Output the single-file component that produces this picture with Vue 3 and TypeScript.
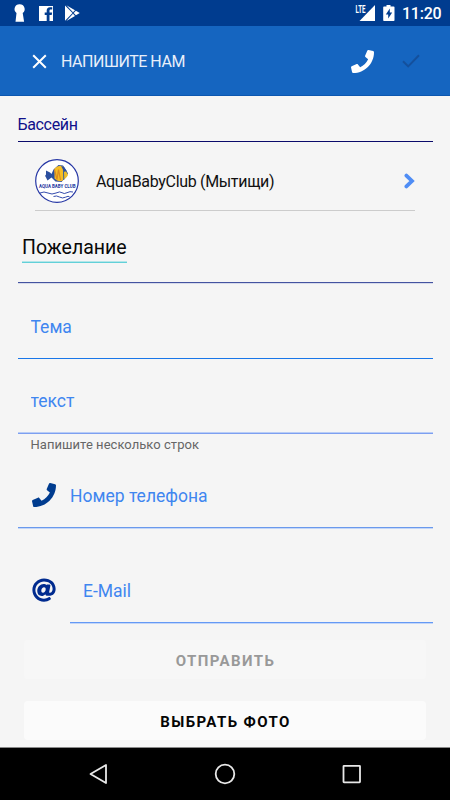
<script setup lang="ts">
import { ref } from 'vue'

const phonePath =
  'M493.4 24.6l-104-24c-11.3-2.6-22.9 3.3-27.5 13.9l-48 112c-4.2 9.8-1.4 21.3 6.9 28l60.6 49.6c-36 76.7-98.9 140.5-177.2 177.2l-49.6-60.6c-6.8-8.3-18.2-11.1-28-6.9l-112 48C3.9 366.5-2 378.1.6 389.4l24 104C27.1 504.2 36.7 512 48 512c256.1 0 464-207.5 464-464 0-11.2-7.7-20.9-18.6-23.4z'
const atPath =
  'M256 8C118.941 8 8 118.919 8 256c0 137.059 110.919 248 248 248 48.154 0 95.342-14.14 135.408-40.223 12.005-7.815 14.625-24.288 5.552-35.372l-10.177-12.433c-7.671-9.371-21.179-11.667-31.373-5.129C325.92 429.757 291.314 440 256 440c-101.458 0-184-82.542-184-184S154.542 72 256 72c100.139 0 184 57.619 184 160 0 38.786-21.093 79.742-58.17 83.693-17.349-.454-16.91-12.857-13.476-30.024l23.433-121.11C394.653 149.75 383.308 136 368.225 136h-44.981a13.518 13.518 0 0 0-13.432 11.993l-.01.092c-14.697-17.901-40.448-21.775-59.971-21.775-74.58 0-137.831 62.234-137.831 151.46 0 65.303 36.785 105.87 96 105.87 26.984 0 57.369-15.637 74.991-38.333 9.522 34.104 40.613 34.104 70.71 34.104C462.609 379.41 504 307.798 504 232 504 95.653 394.023 8 256 8zm-21.68 304.43c-22.249 0-36.07-15.623-36.07-40.771 0-44.993 30.779-72.729 58.63-72.729 22.292 0 35.601 15.241 35.601 40.77 0 45.061-33.875 72.73-58.161 72.73z'

const subject = ref<string>('')
const message = ref<string>('')
const phone = ref<string>('')
const email = ref<string>('')
</script>

<template>
  <div class="screen">
    <div class="status">
      <svg class="status-left" width="90" height="26" viewBox="0 0 90 26" fill="#fff">
        <path d="M19.500 4.200a4.900 4.900 0 0 0-3 8.800l-1 8.800h8.600l-1.400-8.800a4.900 4.900 0 0 0-3.200-8.800z" />
        <path fill-rule="evenodd" d="M39 6h14v15h-3.500v-6h2.200l.4-2.500h-2.600v-1.700c0-.8.300-1.300 1.300-1.300h1.400V7.300h-2.300c-2.100 0-3.200 1.300-3.200 3.200v2h-2v2.500h2v6H39z" />
        <path d="M65 5.500L72.500 13 65 20.800z" />
        <path d="M66.400 5.300l8.600 4.900-2 2zM73.700 13l2.200-2.200 3.900 2.200-3.900 2.300zM66.400 21l6.600-7.200 2 2.100z" />
      </svg>
      <div class="status-right">
        <svg width="42" height="26" viewBox="0 0 42 26" fill="#fff">
          <path d="M21 5v16H5.500z" />
          <path fill="#003c8f" d="M0 3h12v10.300H0z" />
          <text x="1.500" y="12.500" class="lte" textLength="10" lengthAdjust="spacingAndGlyphs">LTE</text>
          <path fill-rule="evenodd" d="M32.500 5h4v1.500h3.200q.8 0 .8.800v12.900q0 .8-.8.800H30q-.8 0-.8-.8V7.300q0-.8.8-.8h2.500zM35.800 8.500l-4 6h2.400v4l4-6h-2.400z" />
        </svg>
        <span class="clock">11:20</span>
      </div>
    </div>

    <header class="toolbar">
      <svg class="close" width="15" height="15" viewBox="0 0 15 15">
        <path d="M1.200 1.200L13.800 13.800M13.800 1.200L1.200 13.800" fill="none" stroke="#fff" stroke-width="2" />
      </svg>
      <h1 class="title">НАПИШИТЕ НАМ</h1>
      <svg class="call" width="23" height="23" viewBox="0 0 512 512"><path fill="#fff" :d="phonePath" /></svg>
      <svg class="done" width="18" height="14" viewBox="0 0 18 14">
        <path d="M1 7.200L6.200 12.400L17 1.300" fill="none" stroke="#14509c" stroke-width="2" />
      </svg>
    </header>

    <main class="form">
      <div class="section">Бассейн</div>

      <div class="club">
        <svg class="logo" width="44" height="44" viewBox="0 0 44 44">
          <circle cx="22" cy="22" r="21.300" fill="#fff" stroke="#2637a5" stroke-width="1.200" />
          <path fill="#2c4f9f" d="M11 11.500l4 2 1.500 1.500 2-4.500 5-4.500 4.500.5 3.500 5 1.500 3-2.500 4-4 4.500-6-.5-4-4-4 3-1.500-3-.5-1-.5-.5 1-1.500z" />
          <path fill="#f6bd24" d="M19.500 9.500q4-4 8.500-2v14q-5 2-8.500-2z" />
          <path fill="#edbd2a" d="M28.500 9q3 3 4.500 7-2 4-5.500 5z" />
          <path d="M19.500 10.500l2.500 10 1.500-10 2 10.500" fill="none" stroke="#dd8b21" stroke-width="1.200" />
          <path d="M28.300 8l.5 13" stroke="#3d6196" />
          <path fill="#2c4f9f" d="M26 7l3 1 2.500 4-2 1z" />
          <text x="4" y="28.700" class="logo-text" textLength="36.500" lengthAdjust="spacingAndGlyphs">AQUA BABY CLUB</text>
          <path d="M5 34q4-2 8 0t8 0 6-.3 5 0 6-.7M18.500 37.500q3-1.300 6 .5t6 .2 4-.5" fill="none" stroke="#354cad" stroke-width="1" />
        </svg>
        <span class="club-name">AquaBabyClub (Мытищи)</span>
        <svg class="chevron" width="11" height="16" viewBox="0 0 11 16">
          <path d="M2.400 2.600L8 8L2.400 13.400" fill="none" stroke="#4f8df5" stroke-width="3.800" stroke-linecap="round" />
        </svg>
      </div>

      <div class="kind"><span class="kind-value">Пожелание</span></div>
      <label class="field subject"><input v-model="subject" placeholder="Тема" /></label>
      <label class="field message"><input v-model="message" placeholder="текст" /></label>
      <div class="hint">Напишите несколько строк</div>
      <label class="field phone">
        <svg width="24" height="24" viewBox="0 0 512 512"><path fill="#003c8f" :d="phonePath" /></svg>
        <input v-model="phone" placeholder="Номер телефона" />
      </label>
      <div class="email-row">
        <svg width="24" height="24" viewBox="0 0 512 512"><path fill="#002b8f" :d="atPath" /></svg>
        <label class="field email"><input v-model="email" placeholder="E-Mail" /></label>
      </div>
      <button class="button send" disabled>ОТПРАВИТЬ</button>
      <button class="button photo">ВЫБРАТЬ ФОТО</button>
    </main>

    <nav class="nav">
      <svg width="20" height="22" viewBox="0 0 20 22"><path d="M18 2v18L2.500 11z" /></svg>
      <svg width="22" height="22" viewBox="0 0 22 22"><circle cx="11" cy="11" r="9.300" /></svg>
      <svg width="20" height="20" viewBox="0 0 20 20"><rect x="1.500" y="1.800" width="16.500" height="16.500" rx=".5" /></svg>
    </nav>
  </div>
</template>

<style>
body {
  margin: 0;
}
</style>

<style scoped>
.screen {
  width: 450px;
  height: 800px;
  overflow: hidden;
  display: flex;
  flex-direction: column;
  background: #f5f5f5;
  font-family: Roboto, 'Liberation Sans', sans-serif;
}
.screen * {
  box-sizing: border-box;
}
svg {
  display: block;
  flex: none;
}
.status {
  height: 26px;
  flex: none;
  display: flex;
  justify-content: space-between;
  background: #003c8f;
  color: #fff;
}
.status-right {
  display: flex;
  width: 96px;
}
.lte {
  font: 700 10px Roboto, sans-serif;
}
.logo-text {
  font: 700 4.500px Roboto, sans-serif;
  fill: #2438a0;
}
.clock {
  margin-left: 6px;
  font-size: 16px;
  font-weight: 500;
  line-height: 28px;
  letter-spacing: -0.250px;
}
.toolbar {
  height: 70px;
  flex: none;
  display: flex;
  align-items: center;
  padding: 1px 30px 0 32px;
  background: #1565c0;
  border-bottom: 1px solid #0c57b0;
}
.title {
  flex: 1;
  margin: 0 0 0 14px;
  padding-top: 1px;
  color: #e8effa;
  font-size: 16px;
  font-weight: 400;
  line-height: 20px;
  letter-spacing: -0.480px;
}
.done {
  margin-left: 28px;
}
.form {
  height: 651px;
  flex: none;
  padding: 0 17.500px;
  display: flex;
  flex-direction: column;
}
.section {
  height: 46px;
  padding-top: 20px;
  border-bottom: 1px solid #0b0b6b;
  color: #10108a;
  font-size: 16px;
  line-height: 18px;
  letter-spacing: -0.350px;
}
.club {
  height: 69px;
  margin: 0 17.500px;
  padding-top: 10px;
  display: flex;
  align-items: center;
  border-bottom: 1px solid #ccc;
}
.club-name {
  flex: 1;
  margin-left: 17px;
  padding-top: 1px;
  color: #111;
  font-size: 16px;
  letter-spacing: -0.330px;
}
.kind {
  height: 72px;
  border-bottom: 1px solid #4453a0;
  box-shadow: 0 1px 0 #d6daea;
  padding: 24px 4.500px 0;
  display: flex;
  align-items: flex-start;
}
.kind-value {
  height: 28px;
  border-bottom: 1px solid #62d0d8;
  box-shadow: inset 0 -1px 0 #b5e6e9;
  color: #080808;
  font-size: 19.500px;
  line-height: 25px;
}
.field {
  display: flex;
  align-items: center;
  border-bottom: 1px solid #1976e8;
}
input {
  width: 100%;
  min-width: 0;
  padding: 0;
  border: 0;
  outline: 0;
  background: transparent;
  color: #222;
  font-family: inherit;
  font-size: 17.500px;
  line-height: 22px;
}
input::placeholder {
  color: #3f86f0;
  opacity: 1;
}
.subject {
  height: 76px;
  padding: 13px 13px 0;
}
.message {
  height: 75px;
  padding: 9px 13px 0;
  border-bottom-color: #7d9ff0;
  box-shadow: inset 0 -1px 0 #b9cdf6;
}
.hint {
  height: 20px;
  padding: 3px 13px 0;
  color: #666;
  font-size: 13px;
  line-height: 16px;
  letter-spacing: 0.040px;
}
.phone {
  height: 74px;
  gap: 14px;
  padding: 11px 0 0 14.500px;
  border-bottom-color: #6a99ec;
  box-shadow: 0 1px 0 #c3d6f8;
}
.phone > svg {
  margin-top: -2px;
}
.email-row {
  height: 95px;
  display: flex;
  gap: 14px;
  padding-left: 14.500px;
  align-items: flex-end;
}
.email-row > svg {
  margin-bottom: 21px;
}
.email {
  flex: 1;
  height: 64px;
  padding-left: 13px;
  border-bottom-color: #6499f5;
  box-shadow: 0 1px 0 #c3d6f8;
}
.button {
  height: 39px;
  margin: 0 6.500px;
  padding: 2px 0 0 1px;
  border: 0;
  border-radius: 4px;
  background: #fbfbfb;
  color: #050505;
  font-family: inherit;
  font-size: 15px;
  font-weight: 700;
  letter-spacing: 1.400px;
}
.send {
  margin-top: 17px;
  background: #f7f7f7;
  color: #999;
}
.photo {
  margin-top: 22px;
}
.nav {
  height: 53px;
  flex: none;
  display: flex;
  justify-content: space-between;
  align-items: center;
  padding: 0 88px;
  background: #000;
  border-top: 1px solid #888;
}
.nav path,
.nav circle,
.nav rect {
  fill: none;
  stroke: #e8e8e8;
  stroke-width: 1.800;
  stroke-linejoin: round;
}
</style>
